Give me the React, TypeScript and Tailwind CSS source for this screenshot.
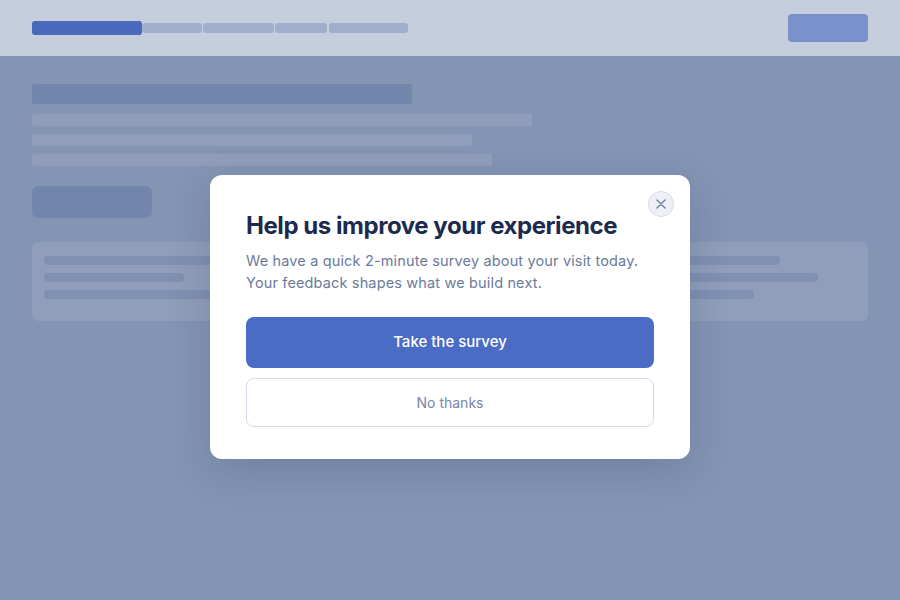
import React from "react";

export default function App() {
  const font = { fontFamily: "Inter, 'Noto Sans', sans-serif" };
  return (
    <div className="relative w-[900px] h-[600px] overflow-hidden bg-[#8494b3]" style={font}>
      {/* header */}
      <div className="h-[56px] bg-[#c6cddd] flex items-center justify-between px-[32px]">
        <div className="flex items-center">
          <div className="w-[110px] h-[14px] rounded-[3px] bg-[#4969bb]" />
          <div className="w-[60px] h-[10px] rounded-[3px] bg-[#a0aecc]" />
          <div className="ml-[1px] w-[71px] h-[10px] rounded-[3px] bg-[#a0aecc]" />
          <div className="ml-[1px] w-[52px] h-[10px] rounded-[3px] bg-[#a0aecc]" />
          <div className="ml-[2px] w-[79px] h-[10px] rounded-[3px] bg-[#a0aecc]" />
        </div>
        <div className="w-[80px] h-[28px] rounded-[4px] bg-[#7a91cb]" />
      </div>
      {/* body */}
      <div className="px-[32px] pt-[28px] flex flex-col">
        <div className="w-[380px] h-[20px] rounded-[3px] bg-[#7285ab]" />
        <div className="mt-[10px] w-[500px] h-[12px] rounded-[3px] bg-[#8f9eba]" />
        <div className="mt-[8px] w-[440px] h-[12px] rounded-[3px] bg-[#8f9eba]" />
        <div className="mt-[8px] w-[460px] h-[12px] rounded-[3px] bg-[#8f9eba]" />
        <div className="mt-[20px] w-[120px] h-[32px] rounded-[6px] bg-[#7285ab]" />
        <div className="mt-[24px] h-[79px] rounded-[6px] bg-[#8f9eba] grid grid-cols-2 gap-[12px]">
          <div className="px-[12px] pt-[14px] flex flex-col gap-[8px]">
            <div className="w-[300px] h-[9px] rounded-[4px] bg-[#7f90b1]" />
            <div className="w-[140px] h-[9px] rounded-[4px] bg-[#7f90b1]" />
            <div className="w-[320px] h-[9px] rounded-[4px] bg-[#7f90b1]" />
          </div>
          <div className="px-[12px] pt-[14px] flex flex-col gap-[8px]">
            <div className="w-[312px] h-[9px] rounded-[4px] bg-[#7f90b1]" />
            <div className="w-[350px] h-[9px] rounded-[4px] bg-[#7f90b1]" />
            <div className="w-[286px] h-[9px] rounded-[4px] bg-[#7f90b1]" />
          </div>
        </div>
      </div>
      {/* modal */}
      <div className="absolute left-[210px] top-[175px] w-[480px] h-[284px] bg-white rounded-[12px] shadow-[0_12px_40px_rgba(30,42,80,0.18)] px-[36px] pt-[36px]">
        <button className="absolute right-[16px] top-[16px] w-[26px] h-[26px] rounded-full bg-[#eef0f6] border border-[#d6dbe9] flex items-center justify-center">
          <svg width="10" height="10" viewBox="0 0 10 10" fill="none" stroke="#7a86a6" strokeWidth="1.6" strokeLinecap="round">
            <path d="M1 1L9 9M9 1L1 9" />
          </svg>
        </button>
        <h2 className="text-[24px] leading-[30px] font-bold text-[#1c2a4e] tracking-[-0.45px]">Help us improve your experience</h2>
        <p className="mt-[9px] text-[14.5px] leading-[22px] tracking-[0.15px] text-[#6b7a9c]">
          We have a quick 2-minute survey about your visit today.<br />Your feedback shapes what we build next.
        </p>
        <button className="mt-[23px] w-full h-[51px] rounded-[8px] bg-[#4a6cc4] text-white text-[15px] font-medium flex items-center justify-center">
          Take the survey
        </button>
        <button className="mt-[10px] w-full h-[49px] rounded-[8px] border border-[#d5daea] bg-white text-[#7a86a6] text-[14px] flex items-center justify-center">
          No thanks
        </button>
      </div>
    </div>
  );
}
